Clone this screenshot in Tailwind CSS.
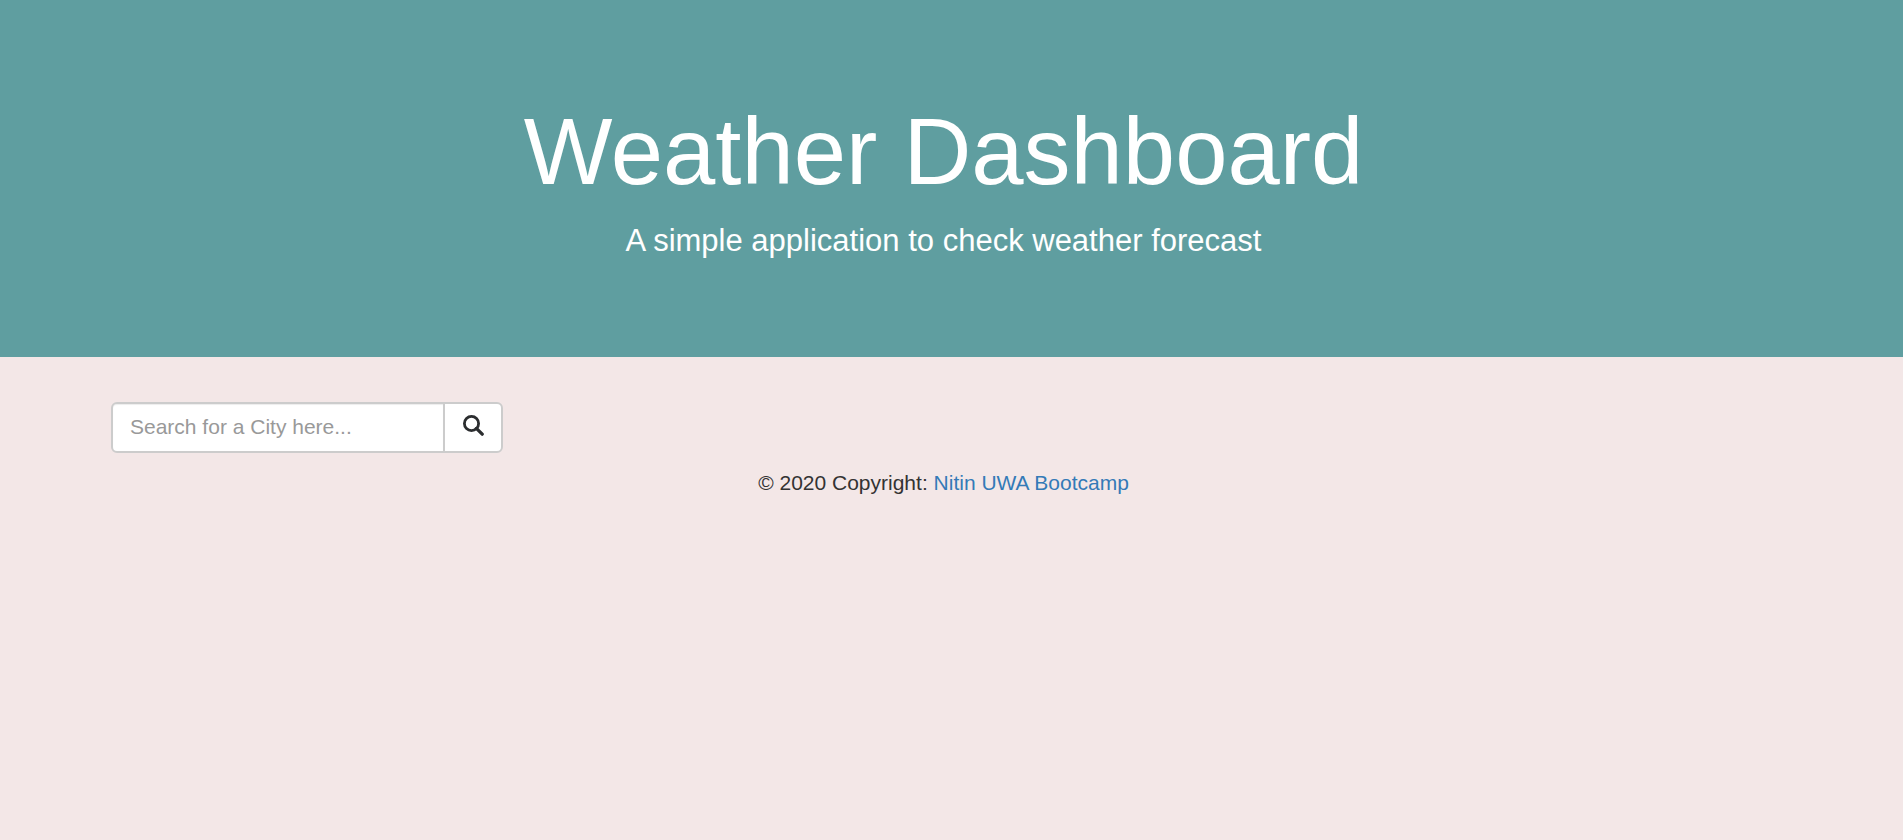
<!DOCTYPE html>
<html lang="en">
<head>
<meta charset="utf-8">
<meta name="viewport" content="width=device-width, initial-scale=1">
<title>Weather Dashboard</title>
<script src="https://cdn.jsdelivr.net/npm/@tailwindcss/browser@4"></script>
</head>
<body class="min-h-screen bg-[#f3e7e7] font-['Liberation_Sans',Arial,sans-serif] text-[21px] leading-[30px] text-[#333333]">
<header class="bg-[#5f9ea0] pt-[100px] pr-4 pb-[94px] text-center text-white">
  <h1 class="text-[94px] leading-[104px]">Weather Dashboard</h1>
  <p class="mt-[14px] text-[31px] leading-[45px]">A simple application to check weather forecast</p>
</header>
<main class="px-[111px] pt-[45px]">
  <form class="flex h-[51px] w-full max-w-[392px]" role="search">
    <input type="text" aria-label="City" placeholder="Search for a City here..." class="min-w-0 flex-1 rounded-l-md border-2 border-[#cccccc] bg-white px-[17px] pb-0.5 shadow-[inset_0_1px_1px_rgba(0,0,0,0.075)] placeholder:text-[#999999]">
    <button type="button" aria-label="Search" class="-ml-0.5 flex w-[60px] items-center justify-center rounded-r-md border-2 border-[#cccccc] bg-white pb-1">
      <svg class="size-[21px]" viewBox="0 0 21 21" fill="none" stroke="#2b2d2f" aria-hidden="true">
        <circle cx="8.5" cy="8.5" r="7.1" stroke-width="2.8"/>
        <path d="M13.4 13.4l5.8 5.8" stroke-width="3.3" stroke-linecap="round"/>
      </svg>
    </button>
  </form>
</main>
<footer class="pt-[15px] pr-4 text-center">© 2020 Copyright: <a href="#" class="text-[#337ab7]">Nitin UWA Bootcamp</a></footer>
</body>
</html>
